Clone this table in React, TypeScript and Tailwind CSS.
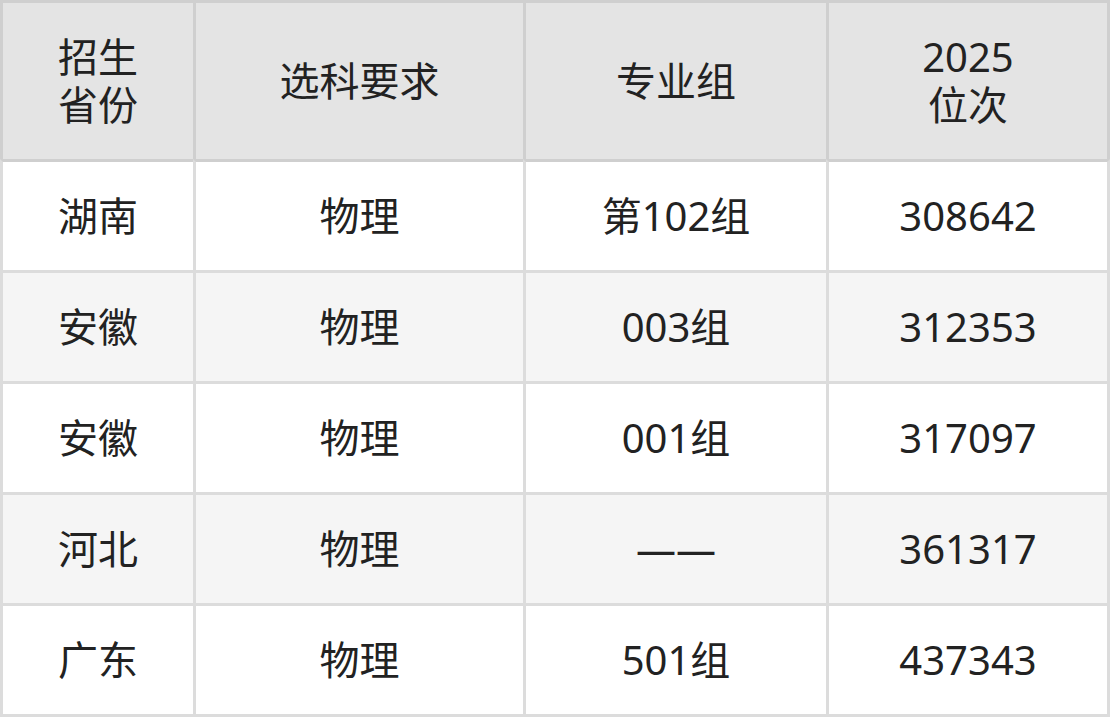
const HEAD = ['招生\n省份', '选科要求', '专业组', '2025\n位次']

const ROWS = [
  ['湖南', '物理', '第102组', '308642'],
  ['安徽', '物理', '003组', '312353'],
  ['安徽', '物理', '001组', '317097'],
  ['河北', '物理', '——', '361317'],
  ['广东', '物理', '501组', '437343'],
]

// column widths include each cell's 3px left border; last one also carries the right border
const COLS = 'grid-cols-[193px_330px_303px_284px]'

export default function App() {
  return (
    <div
      className="w-[1110px] h-[717px] bg-white text-[#222] text-[40px] leading-[48px]"
      style={{ fontFamily: '"Noto Sans", "Noto Sans CJK SC", sans-serif' }}
    >
      <div className={`grid ${COLS} grid-rows-[159px_111px_111px_111px_111px_114px]`}>
        {HEAD.map((h, i) => (
          <div
            key={h}
            className={`flex items-center justify-center text-center whitespace-pre-line bg-[#e4e4e4] border-l-[3px] border-t-[3px] border-[#cfcfcf] ${
              i === 3 ? 'border-r-[3px]' : ''
            }`}
          >
            {h}
          </div>
        ))}
        {ROWS.map((row, r) =>
          row.map((cell, c) => (
            <div
              key={`${r}-${c}`}
              className={`flex items-center justify-center text-center border-l-[3px] border-t-[3px] border-l-[#dcdcdc] border-r-[#dcdcdc] border-b-[#dcdcdc] ${
                r === 0 ? 'border-t-[#cfcfcf]' : 'border-t-[#dcdcdc]'
              } ${r % 2 === 1 ? 'bg-[#f5f5f5]' : 'bg-white'} ${c === 3 ? 'border-r-[3px]' : ''} ${
                r === ROWS.length - 1 ? 'border-b-[3px]' : ''
              }`}
            >
              {cell}
            </div>
          )),
        )}
      </div>
    </div>
  )
}
